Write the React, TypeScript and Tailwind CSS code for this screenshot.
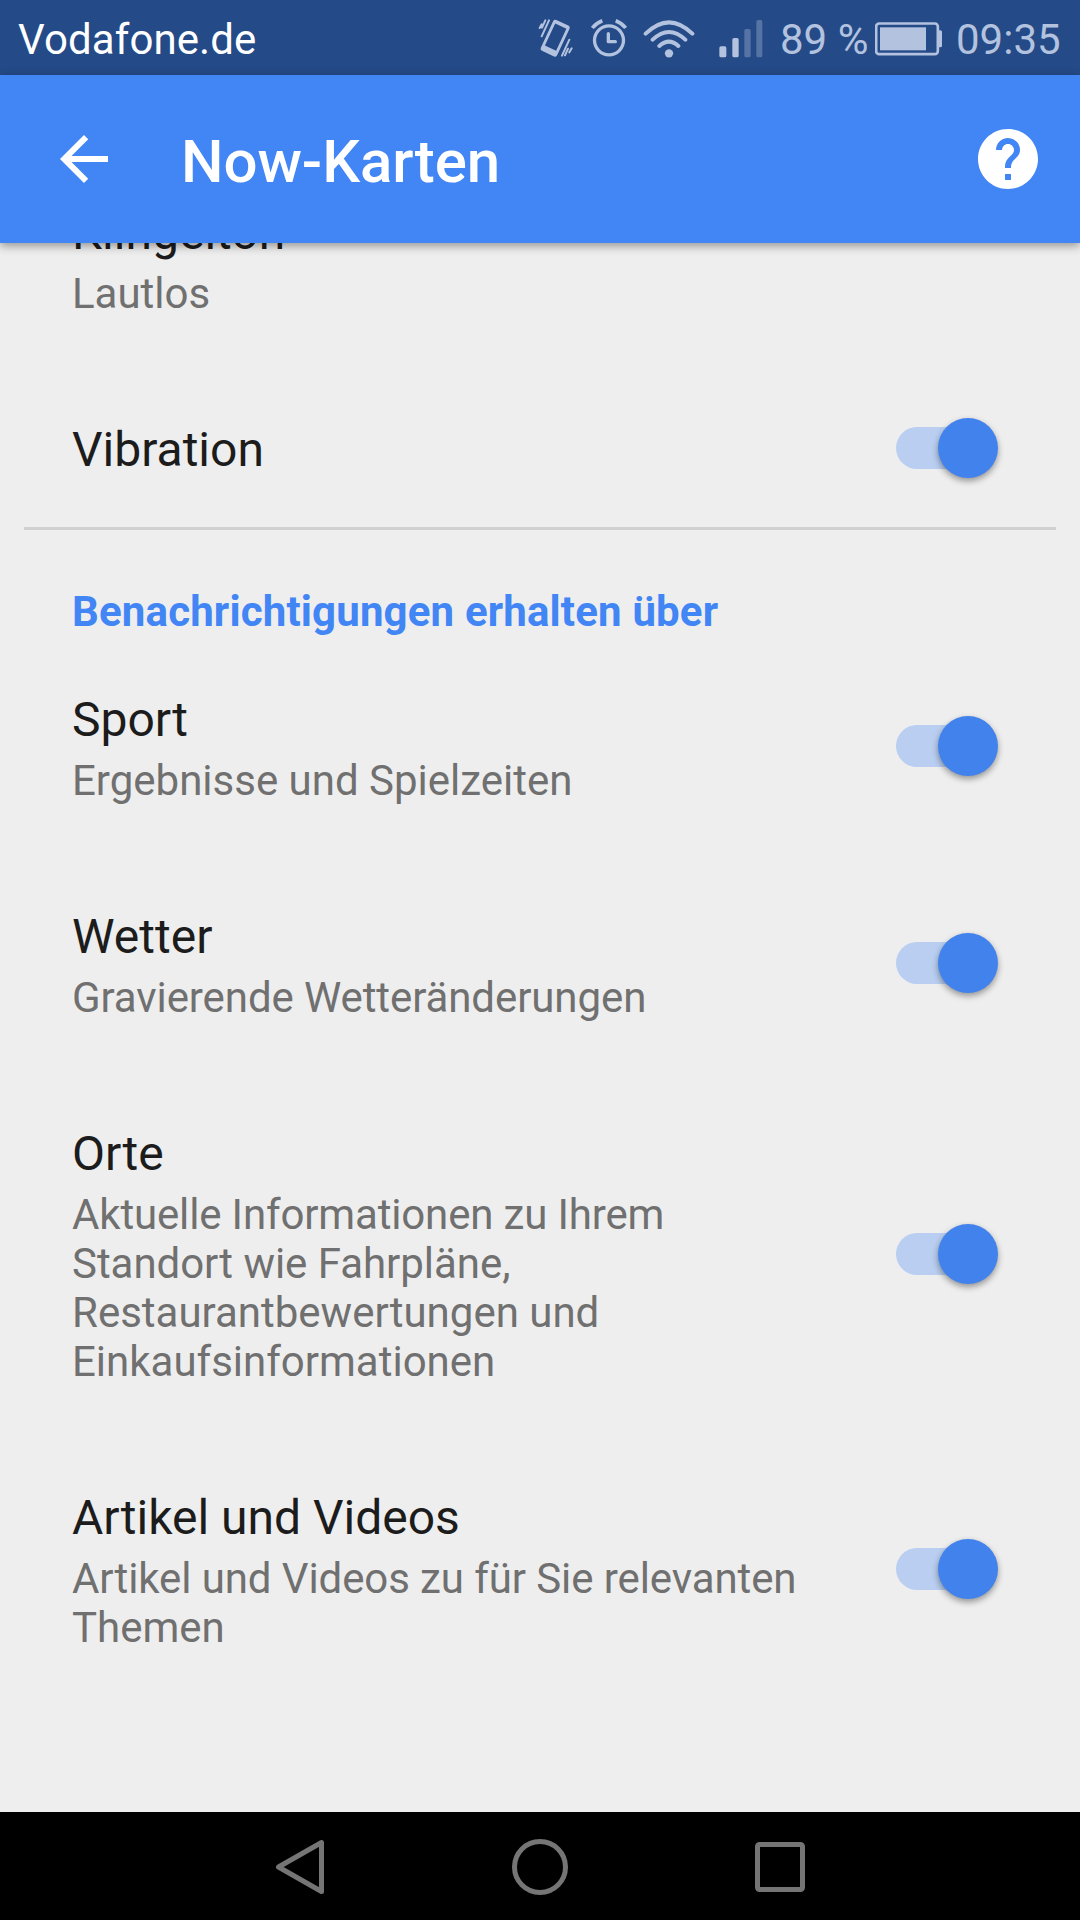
type Line = {
  text: string
  className?: string
}

type Setting = {
  title: string
  lines?: Line[]
  toggle?: boolean
}

const general: Setting[] = [
  { title: 'Klingelton', lines: [{ text: 'Lautlos' }] },
  { title: 'Vibration', toggle: true },
]

const topics: Setting[] = [
  { title: 'Sport', lines: [{ text: 'Ergebnisse und Spielzeiten' }], toggle: true },
  {
    title: 'Wetter',
    lines: [{ text: 'Gravierende Wetteränderungen', className: 'tracking-[-0.09px]' }],
    toggle: true,
  },
  {
    title: 'Orte',
    lines: [
      { text: 'Aktuelle Informationen zu Ihrem', className: 'tracking-[-0.15px]' },
      { text: 'Standort wie Fahrpläne,', className: 'tracking-[-0.04px]' },
      { text: 'Restaurantbewertungen und' },
      { text: 'Einkaufsinformationen' },
    ],
    toggle: true,
  },
  {
    title: 'Artikel und Videos',
    lines: [
      { text: 'Artikel und Videos zu für Sie relevanten', className: 'tracking-[-0.09px]' },
      { text: 'Themen' },
    ],
    toggle: true,
  },
]

function VibrateIcon() {
  return (
    <svg className="w-9 h-10 shrink-0" viewBox="50 50 108 120" fill="none" stroke="currentColor" strokeLinecap="round">
      <g transform="translate(104.5 110.5) rotate(25)">
        <path
          fill="currentColor"
          stroke="none"
          fillRule="evenodd"
          d="M-20 -51H20Q27 -51 27 -44V44Q27 51 20 51H-20Q-27 51 -27 44V-44Q-27 -51 -20 -51ZM-18.500 -40V33H18.500V-40Z"
        />
      </g>
      <path strokeWidth="6" d="M86 57L64 105M75 57L65 79M64 69L58 80M147 115L125 163M143 142L134 162M154 141L147 153" />
    </svg>
  )
}

function AlarmIcon() {
  return (
    <svg className="w-9 h-10 shrink-0" viewBox="213 50 108 120" fill="none" stroke="currentColor">
      <circle cx="267" cy="117" r="43.500" strokeWidth="10" />
      <path strokeWidth="10" strokeLinecap="round" strokeLinejoin="round" d="M265 97V121H286" />
      <path strokeWidth="11" d="M217 80Q228 65 247 58M317 80Q306 65 287 58" />
    </svg>
  )
}

function WifiIcon() {
  return (
    <svg className="w-[52px] h-10 shrink-0" viewBox="369 50 156 120" fill="none" stroke="currentColor" strokeLinecap="round">
      <path strokeWidth="12" d="M377 97Q447 29 517 97M398 115Q447 69 496 115M418 134Q447 108 475 134" />
      <circle cx="447" cy="156" r="12.500" fill="currentColor" stroke="none" />
    </svg>
  )
}

function SignalIcon() {
  return (
    <svg className="w-[44px] h-10 shrink-0" viewBox="596 50 132 120" fill="currentColor">
      <rect x="597" y="135" width="21" height="33" rx="5" />
      <rect x="636" y="110" width="19" height="58" rx="5" />
      <rect x="672" y="83" width="19" height="85" rx="5" opacity=".35" />
      <rect x="708" y="56" width="18" height="112" rx="5" opacity=".35" />
    </svg>
  )
}

function BatteryIcon() {
  return (
    <svg className="mt-[2px] w-[67px] h-[34px] shrink-0" viewBox="285 65 201 102">
      <rect x="288.500" y="69.500" width="185" height="92" rx="9" fill="none" stroke="currentColor" strokeWidth="8" />
      <rect x="300" y="81" width="138" height="69" fill="currentColor" />
      <path d="M475 90H481Q486 90 486 95V136Q486 141 481 141H475Z" fill="currentColor" />
    </svg>
  )
}

function StatusBar() {
  return (
    <div className="flex h-[75px] shrink-0 items-center bg-[#244a87] pl-[18px] text-[42px] leading-[49px] text-[#b3c2de]">
      <span className="mt-[3px] tracking-[0.1px] text-white">Vodafone.de</span>
      <div className="ml-auto flex items-center pr-[18px]">
        <VibrateIcon />
        <div className="w-[18px]" />
        <AlarmIcon />
        <div className="w-4" />
        <WifiIcon />
        <div className="w-[24px]" />
        <SignalIcon />
        <span className="mt-[3px] ml-[17px] w-[95px] whitespace-nowrap">89 %</span>
        <BatteryIcon />
        <span className="mt-[3px] ml-[14px] w-[106px]">09:35</span>
      </div>
    </div>
  )
}

function AppBar() {
  return (
    <header className="relative z-10 flex h-[168px] shrink-0 items-center bg-[#4285f4] pr-[42px] pl-[60px] text-white shadow-[0_3px_9px_rgba(0,0,0,0.38)]">
      <svg className="w-12 h-12" viewBox="4 4 16 16" fill="currentColor">
        <path d="M20 11H7.830l5.590-5.590L12 4l-8 8 8 8 1.410-1.410L7.830 13H20v-2z" />
      </svg>
      <h1 className="mt-1.5 ml-[73px] text-[60px] leading-[70px] font-medium tracking-[-0.1px]">Now-Karten</h1>
      <svg className="ml-auto h-[60px] w-[60px]" viewBox="2 2 20 20" fill="currentColor">
        <path d="M12 2C6.480 2 2 6.480 2 12s4.480 10 10 10 10-4.480 10-10S17.520 2 12 2zm1 17h-2v-2h2v2zm2.070-7.750l-.9.920C13.450 12.900 13 13.500 13 15h-2v-.5c0-1.100.45-2.100 1.170-2.830l1.240-1.260c.37-.36.59-.86.59-1.410 0-1.100-.9-2-2-2s-2 .9-2 2H8c0-2.210 1.790-4 4-4s4 1.790 4 4c0 .88-.36 1.680-.93 2.250z" />
      </svg>
    </header>
  )
}

function Switch() {
  return (
    <div className="relative -mt-[5px] h-[60px] w-[102px] shrink-0">
      <div className="absolute top-[9px] left-0 h-[42px] w-[90px] rounded-full bg-[#b9cef0]" />
      <div className="absolute top-0 right-0 h-[60px] w-[60px] rounded-full bg-[#4282ec] shadow-[0_3px_6px_rgba(0,0,0,0.38)]" />
    </div>
  )
}

function Row({ title, lines, toggle }: Setting) {
  return (
    <div className="flex items-center justify-between pt-[53px] pr-[82.5px] pb-[51px] pl-[72px]">
      <div>
        <div className="text-[48px] leading-[56px] text-[#1c1c1c]">{title}</div>
        {lines && (
          <div className="mt-2 text-[42px] leading-[49px] whitespace-nowrap text-[#707070]">
            {lines.map((line) => (
              <div key={line.text} className={line.className}>{line.text}</div>
            ))}
          </div>
        )}
      </div>
      {toggle && <Switch />}
    </div>
  )
}

function NavBar() {
  return (
    <nav className="flex h-[108px] shrink-0 items-center justify-center gap-[180px] bg-black text-[#757575]">
      <svg className="h-[60px] w-[60px]" viewBox="0 0 60 60" fill="none" stroke="currentColor" strokeWidth="5" strokeLinejoin="round">
        <path d="M8.500 31L51.500 6.500V55.500Z" />
      </svg>
      <svg className="h-[60px] w-[60px]" viewBox="0 0 60 60" fill="none" stroke="currentColor" strokeWidth="5">
        <circle cx="30" cy="31" r="25.500" />
      </svg>
      <svg className="h-[60px] w-[60px]" viewBox="0 0 60 60" fill="none" stroke="currentColor" strokeWidth="5">
        <rect x="7.500" y="8.500" width="45" height="45" rx="2" />
      </svg>
    </nav>
  )
}

export default function App() {
  return (
    <div className="flex h-[1920px] w-[1080px] flex-col overflow-hidden bg-[#eeeeee] font-['Roboto',sans-serif]">
      <StatusBar />
      <AppBar />
      <main className="min-h-0 flex-1 overflow-hidden">
        {/* list is scrolled, first row slides under the app bar */}
        <div className="-mt-[91px]">
          {general.map((item) => (
            <Row key={item.title} {...item} />
          ))}
          <div className="mx-6 -mt-[2px] h-[3px] bg-[#d0d0d0]" />
          <h2 className="h-[109px] pt-[57px] pl-[72px] text-[42px] leading-[49px] font-bold tracking-[0.16px] text-[#4285f4]">
            Benachrichtigungen erhalten über
          </h2>
          {topics.map((item) => (
            <Row key={item.title} {...item} />
          ))}
        </div>
      </main>
      <NavBar />
    </div>
  )
}
